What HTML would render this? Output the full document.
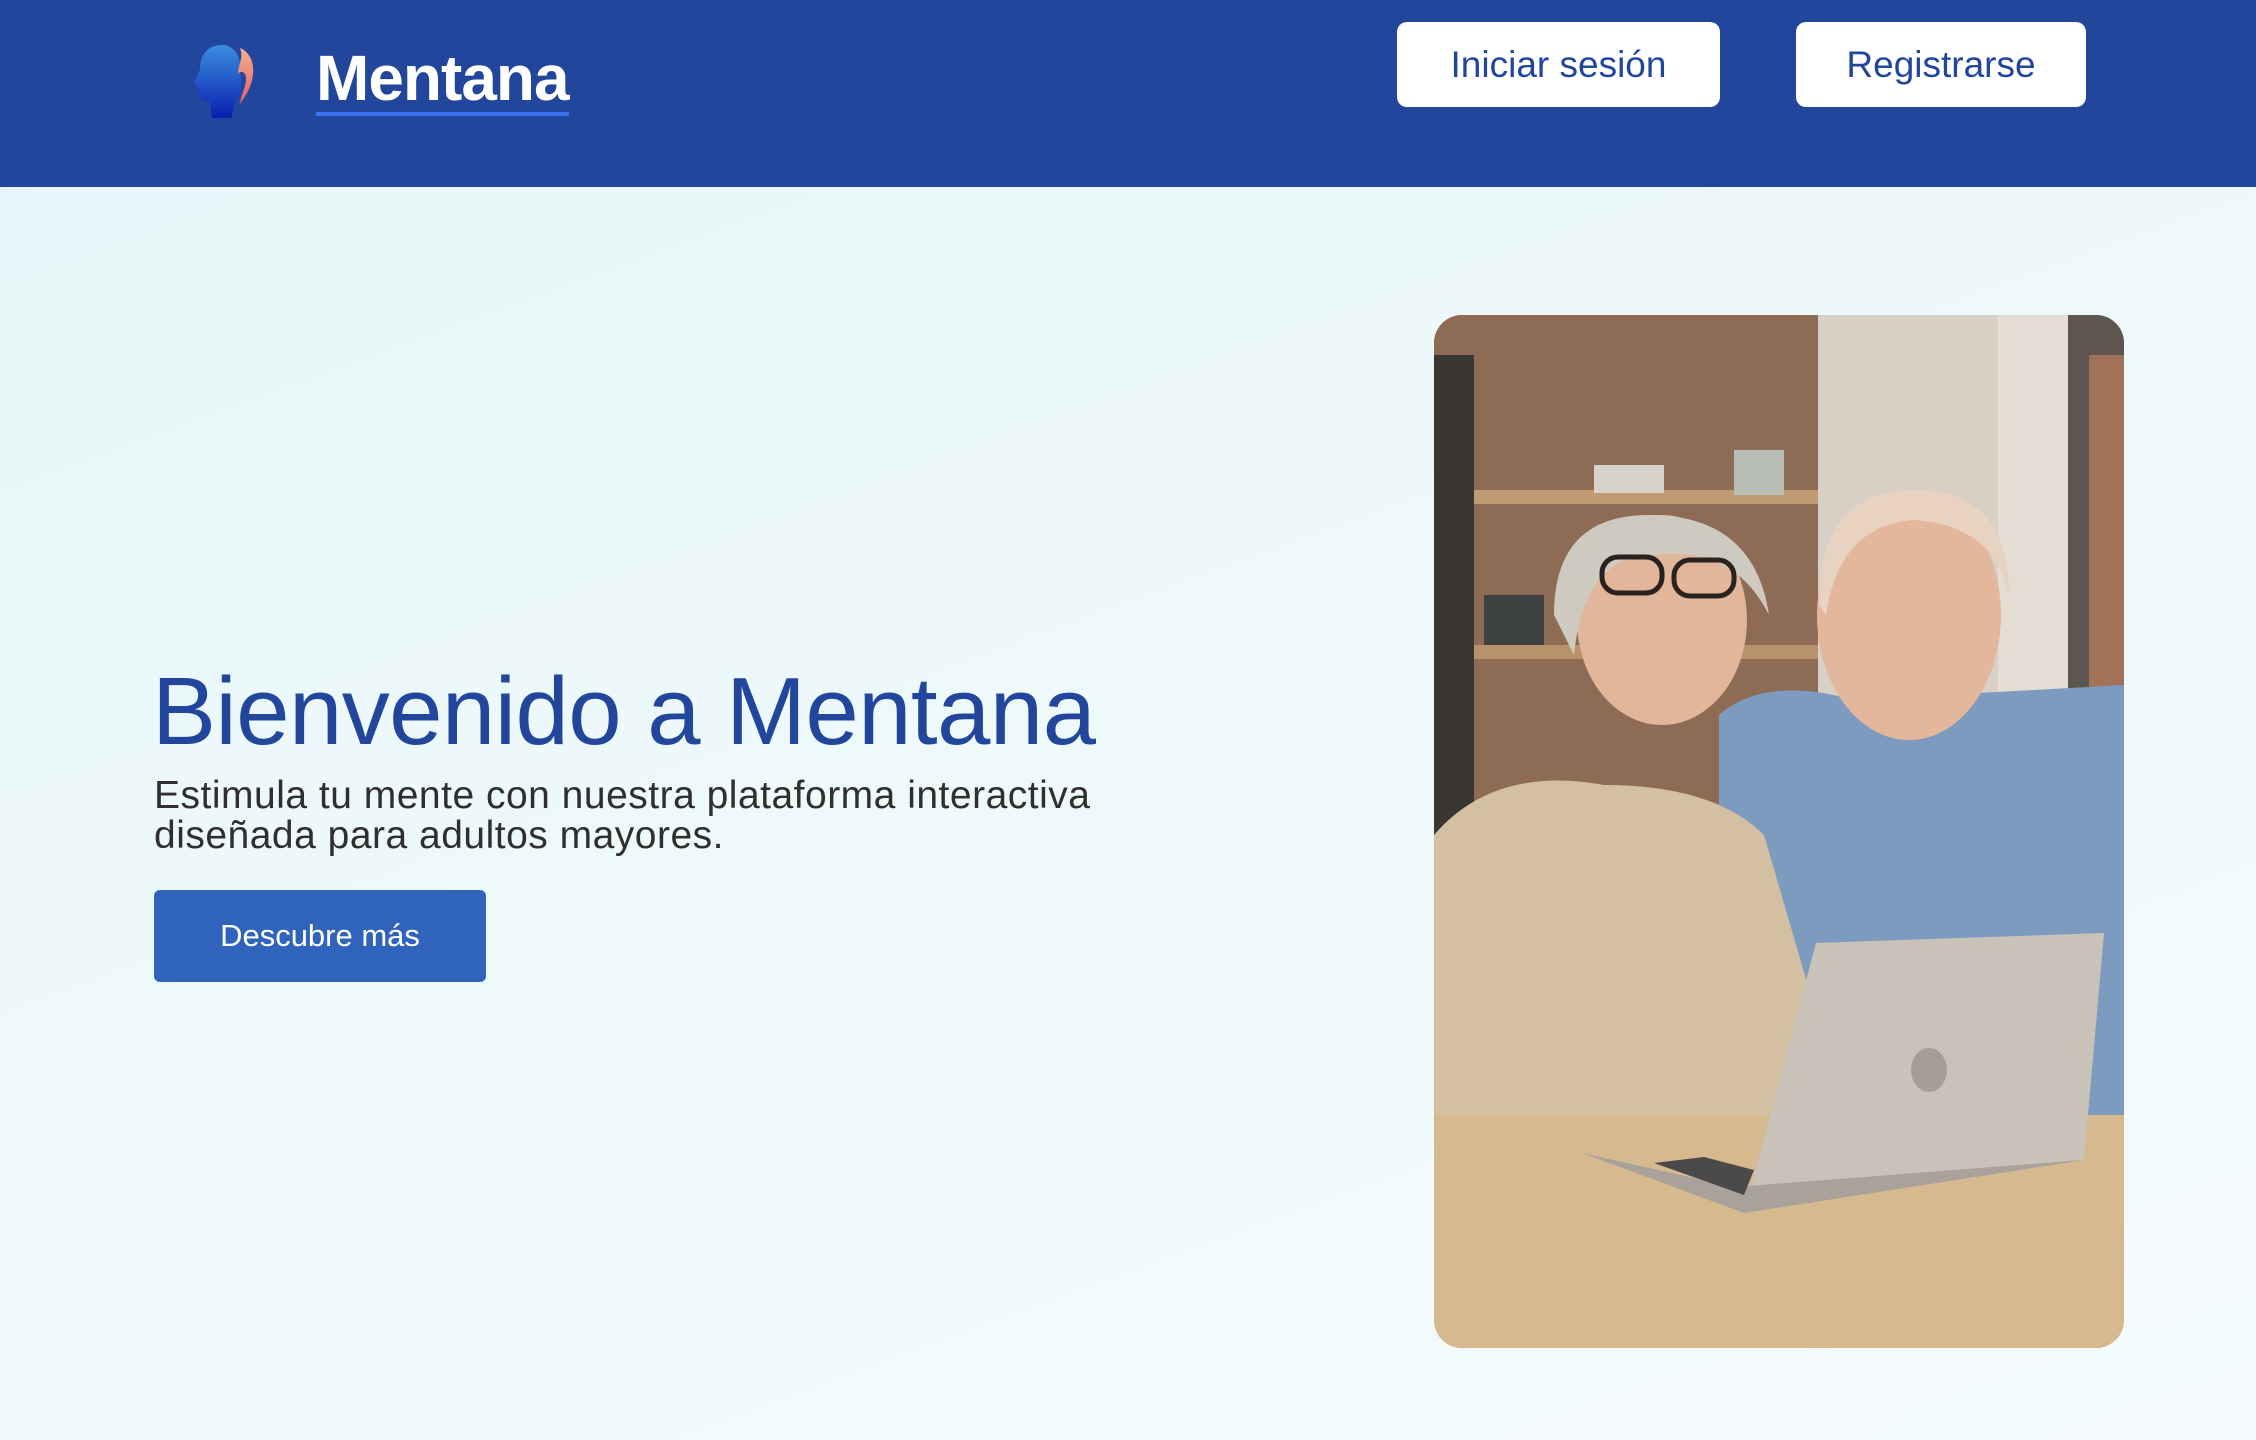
<!DOCTYPE html>
<html><head><meta charset="utf-8">
<style>
*{margin:0;padding:0;box-sizing:border-box}
body{width:2256px;height:1440px;overflow:hidden;font-family:"Liberation Sans",sans-serif;background:linear-gradient(160deg,#e5f5f7 0%,#eef9fa 50%,#f5fbfc 100%);position:relative}
.hdr{position:absolute;left:0;top:0;width:2256px;height:187px;background:#21469b}
.logo{position:absolute;left:192px;top:42px}
.brand{position:absolute;left:316px;top:38px;font-size:64px;font-weight:bold;color:#fff;line-height:80px;letter-spacing:-1px}
.brand:after{content:"";position:absolute;left:0;right:0;bottom:2px;height:4px;background:#3a72ee}
.btn{position:absolute;top:22px;height:85px;background:#fff;border-radius:10px;color:#21469b;font-size:37px;display:flex;align-items:center;justify-content:center}
h1{position:absolute;left:152px;top:652px;font-size:96px;font-weight:normal;color:#21469b;line-height:120px;white-space:nowrap;letter-spacing:-0.6px}
p{position:absolute;left:154px;top:776px;font-size:39px;color:#2f2f2f;line-height:40px;width:990px;letter-spacing:0.5px}
.cta{position:absolute;left:154px;top:890px;width:332px;height:92px;background:#3064bc;border-radius:6px;color:#fff;font-size:31px;display:flex;align-items:center;justify-content:center}
.img{position:absolute;left:1434px;top:315px;width:690px;height:1033px;border-radius:28px;overflow:hidden}
</style></head><body>
<div class="hdr">
<svg class="logo" width="70" height="78" viewBox="0 0 70 78">
<defs><linearGradient id="g1" x1="0" y1="0" x2="0" y2="1"><stop offset="0" stop-color="#3a8ee0"/><stop offset="1" stop-color="#0a1fb0"/></linearGradient>
<linearGradient id="g2" x1="0" y1="0" x2="0" y2="1"><stop offset="0" stop-color="#f2b08a"/><stop offset="1" stop-color="#e6606a"/></linearGradient></defs>
<path d="M30 3C15 3 8 14 8 26C8 30 4 36 2 40C1 42 4 43 6 44C6 48 5 52 8 56C10 60 16 60 18 60C20 66 18 72 20 76L40 76C40 68 42 62 46 56C50 50 50 40 48 30C50 18 44 3 30 3Z" fill="url(#g1)"/>
<path d="M48 6C58 10 64 22 60 38C58 48 52 56 48 62C48 55 54 46 54 36C54 30 48 28 46 32C46 22 52 16 48 6Z" fill="url(#g2)"/>
</svg>
<div class="brand">Mentana</div>
<div class="btn" style="left:1397px;width:323px">Iniciar sesión</div>
<div class="btn" style="left:1796px;width:290px">Registrarse</div>
</div>
<h1>Bienvenido a Mentana</h1>
<p>Estimula tu mente con nuestra plataforma interactiva diseñada para adultos mayores.</p>
<div class="cta">Descubre más</div>
<div class="img">
<svg width="690" height="1033" viewBox="0 0 690 1033">
<rect width="690" height="1033" fill="#a98a6e"/>
<rect x="0" y="0" width="384" height="560" fill="#8d6b55"/>
<rect x="384" y="0" width="180" height="560" fill="#d8d0c4"/>
<rect x="564" y="0" width="70" height="560" fill="#e3ddd3"/>
<rect x="634" y="0" width="56" height="560" fill="#5d5650"/>
<rect x="655" y="40" width="35" height="460" fill="#a0725a"/>
<rect x="0" y="40" width="40" height="560" fill="#3a3632"/>
<rect x="40" y="175" width="344" height="14" fill="#c09a70"/>
<rect x="40" y="330" width="344" height="14" fill="#b7926a"/>
<rect x="160" y="150" width="70" height="28" fill="#d8d3ca"/>
<rect x="300" y="135" width="50" height="45" fill="#b9bdb7"/>
<rect x="50" y="280" width="60" height="50" fill="#3e4240"/>
<path d="M285 400 Q330 360 420 385 L690 370 L690 820 L285 820Z" fill="#7d9bbe"/>
<path d="M0 520 Q60 450 170 470 Q280 470 330 520 L400 760 L400 830 L0 830Z" fill="#d3c0a2"/>
<ellipse cx="228" cy="305" rx="85" ry="105" fill="#e1b69a"/>
<path d="M120 300 Q120 200 215 200 Q320 200 335 300 Q300 230 220 240 Q150 240 140 340Z" fill="#cfcac0"/>
<rect x="168" y="242" width="60" height="36" rx="16" fill="none" stroke="#2a2220" stroke-width="5"/>
<rect x="240" y="245" width="60" height="36" rx="16" fill="none" stroke="#2a2220" stroke-width="5"/>
<ellipse cx="475" cy="300" rx="92" ry="125" fill="#e3b79c"/>
<path d="M385 290 Q385 175 480 175 Q575 175 575 280 Q560 210 480 205 Q405 210 392 300Z" fill="#e8d3c2"/>
<rect x="0" y="800" width="690" height="240" fill="#d6b98e"/>
<path d="M382 628 L670 618 L650 845 L310 898Z" fill="#c9c2b8"/>
<path d="M148 838 L310 898 L650 845 L300 872 Z" fill="#a8a29a"/>
<path d="M220 848 L310 880 L320 855 L270 842Z" fill="#4a4a4a"/>
<ellipse cx="495" cy="755" rx="18" ry="22" fill="#a49e94"/>
</svg>
</div>
</body></html>
